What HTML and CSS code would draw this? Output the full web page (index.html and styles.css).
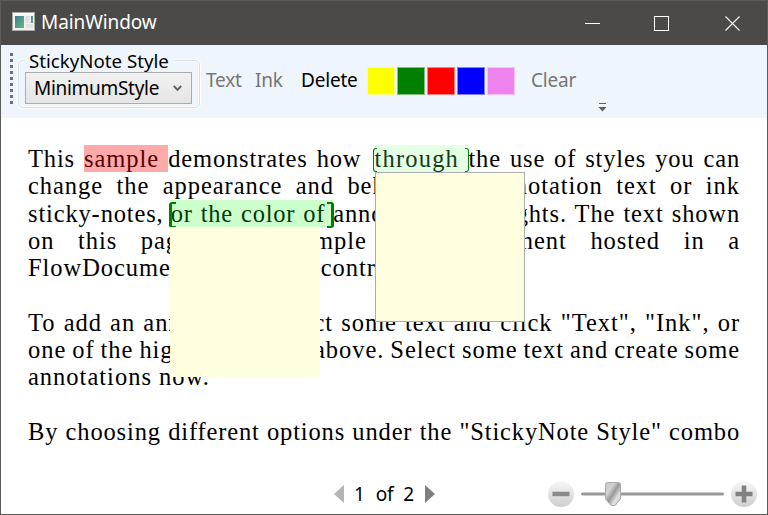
FILE: index.html
```
<!DOCTYPE html>
<html lang="en">
<head>
<meta charset="utf-8">
<title>MainWindow</title>
<link rel="stylesheet" href="styles.css">
</head>
<body>
<div class="window">
  <header class="titlebar">
    <svg class="app-icon" width="24" height="20" viewBox="0 0 24 20"><defs><linearGradient id="scr" x2="1" y2="1"><stop stop-color="#3c7d9c"/><stop offset="1" stop-color="#6bb878"/></linearGradient></defs><rect x=".5" y=".5" width="22" height="18" fill="#f2f2f2" stroke="#a9a9a9"/><path d="M1 2h21" stroke="#fff" stroke-width="2"/><rect x="3" y="4" width="9" height="12" fill="url(#scr)"/><rect x="13" y="4" width="5" height="7" fill="#e3e3e3"/><rect x="19" y="4" width="2" height="7" fill="url(#scr)"/><rect x="14" y="12" width="7" height="4" fill="#e3e3e3"/></svg>
    <span class="title">MainWindow</span>
    <div class="controls">
      <svg width="15" height="15"><path d="M0 7.5h15" stroke="#fff"/></svg>
      <svg width="15" height="15"><rect x=".5" y=".5" width="14" height="14" fill="none" stroke="#fff"/></svg>
      <svg class="close" width="15" height="15"><path d="M.5 .5l14 14M14.5 .5l-14 14" stroke="#fff" stroke-width="1.1"/></svg>
    </div>
  </header>
  <div class="toolbar">
    <div class="grip"></div>
    <fieldset class="group">
      <legend>StickyNote Style</legend>
      <div class="combo"><span>MinimumStyle</span><svg width="9" height="7"><path d="M.8 1l3.7 3.8L8.200 1" fill="none" stroke="#606060" stroke-width="1.9"/></svg></div>
    </fieldset>
    <span class="cmd text off">Text</span>
    <span class="cmd ink off">Ink</span>
    <span class="cmd delete">Delete</span>
    <div class="swatches"><i class="yellow"></i><i class="green"></i><i class="red"></i><i class="blue"></i><i class="violet"></i></div>
    <span class="cmd clear off">Clear</span>
    <svg class="overflow" width="9" height="11"><path d="M1 2.500h7" stroke="#fff" stroke-width="2"/><path d="M1 1.500h7" stroke="#606060"/><path d="M.5 5h8L4.500 9.500z" fill="#606060"/></svg>
  </div>
  <main class="page">
    <p class="l1">This <mark class="pink">sample </mark>demonstrates how <mark class="pale">through </mark>the use of styles you can</p>
    <p class="l2">change the appearance and behavior of annotation text or ink</p>
    <p class="l3">sticky-notes, <mark class="mint">or the color of </mark>annotation highlights. The text shown</p>
    <p class="l4">on this page is a sample flow document hosted in a</p>
    <p class="l5 last">FlowDocumentPageViewer control.</p>
    <p class="gap l7">To add an annotation, select some text and click "Text", "Ink", or</p>
    <p class="l8">one of the highlight colors above. Select some text and create some</p>
    <p class="l9 last">annotations now.</p>
    <p class="gap l11">By choosing different options under the "StickyNote Style" combo</p>
    <div class="note plain"></div>
    <div class="note bordered"></div>
  </main>
  <footer class="statusbar">
    <div class="pager">
      <svg width="10" height="18"><path d="M10 0v18L0 9z" fill="#b4b4b4"/></svg>
      <span>1</span><span class="of">of</span><span>2</span>
      <svg width="10" height="18"><path d="M0 0v18l10-9z" fill="#808080"/></svg>
    </div>
    <div class="zoom">
      <svg width="212" height="28"><defs><linearGradient id="btn" x2="0" y2="1"><stop stop-color="#f8f8f8"/><stop offset="1" stop-color="#cdcdcd"/></linearGradient><linearGradient id="thumb" x2="1" y2="1"><stop stop-color="#c4c4c4"/><stop offset=".3" stop-color="#d2d2d2"/><stop offset=".5" stop-color="#999"/><stop offset=".72" stop-color="#e2e2e2"/><stop offset="1" stop-color="#bbb"/></linearGradient></defs><circle cx="14" cy="14" r="13" fill="url(#btn)"/><path d="M5.500 14h17" stroke="#8b8b8b" stroke-width="4.500"/><path d="M35.500 14h140" stroke="#999" stroke-width="3" stroke-linecap="round"/><path d="M58.500 4.500q0-2 2-2h11q2 0 2 2v14.500l-5.500 6.500h-4l-5.500-6.500z" fill="url(#thumb)" stroke="#aaa"/><circle cx="197" cy="14" r="13" fill="url(#btn)"/><path d="M188.500 14h17M197 5.500v17" stroke="#818181" stroke-width="4.500"/></svg>
    </div>
  </footer>
</div>
</body>
</html>
```
FILE: styles.css
```
* { box-sizing: border-box; }
body { margin: 0; background: #fff; color: #000; }
.window {
  width: 768px; height: 515px; border: 1px solid #5b5b5a; background: #fff;
  display: flex; flex-direction: column; overflow: hidden;
  font: 19px/26px "Noto Sans", "Open Sans", sans-serif;
}
.titlebar { height: 44px; flex: none; background: #4c4a48; display: flex; align-items: center; padding: 0 27px 0 11px; }
.app-icon { flex: none; margin-top: -2px; }
.title { color: #fff; margin-left: 5px; letter-spacing: -.1px; margin-top: -2px; }
.controls { margin-left: auto; display: flex; gap: 54px; }
.controls svg { display: block; }
.controls .close { margin-left: 2px; }
.toolbar { height: 73px; flex: none; background: #eef5fd; display: flex; align-items: flex-start; white-space: nowrap; }
.grip { width: 3px; height: 54px; margin: 8px 0 0 9px; background: repeating-linear-gradient(#707070 0 3px, transparent 3px 6px); }
.group {
  width: 182px; height: 59px; margin: 4px 0 0 5px; padding: 0 7px 7px 6px; min-width: 0;
  border: 1px solid #d5dfe5; border-radius: 5px;
  box-shadow: inset 0 0 0 1px #fff, 0 0 0 1px #fff;
}
.group legend { padding: 0 5px; margin-left: -1px; line-height: 23px; font-size: 18.700px; background: #eef5fd; }
.combo {
  width: 167px; height: 32px; border: 1px solid #acacac; background: linear-gradient(#f1f1f1, #e5e5e5);
  display: flex; align-items: center; justify-content: space-between; padding: 0 9px 0 8px; letter-spacing: -.3px;
}
.cmd { margin-top: 22px; letter-spacing: -.2px; }
.off { color: #767676; }
.text { width: 37px; margin-left: 6px; }
.ink { width: 27px; margin-left: 12px; }
.delete { width: 55px; margin-left: 19px; }
.swatches { display: flex; gap: 2px; margin: 22px 0 0 11px; }
.swatches i { width: 28px; height: 28px; border: 1px solid #ffffff80; }
.yellow { background: #ff0; }
.green { background: #008000; }
.red { background: #f00; }
.blue { background: #00f; }
.violet { background: #ee82ee; }
.clear { width: 44px; margin-left: 16px; }
.overflow { margin: 57px 0 0 23px; }
.page {
  position: relative; height: 355px; flex: none; padding: 27px 27px 0;
  font: 24.500px/27.250px "Liberation Serif", serif; letter-spacing: .95px; word-spacing: -2px;
}
.page p { margin: 0; height: 27.250px; white-space: nowrap; text-align: justify; text-align-last: justify; }
.page p.last { text-align-last: left; }
.page p.gap { margin-top: 27.250px; }
.page .l1 { letter-spacing: .85px; }
.page .l1 .pink { letter-spacing: .95px; }
.page .l1 .pale { letter-spacing: 1.2px; margin-left: 4px; }
.page .l5 { letter-spacing: .95px; word-spacing: -6px; }
.page .l9 { letter-spacing: 1px; word-spacing: 0; }
.page .l11 { letter-spacing: .85px; }
mark { color: inherit; padding: 0; }
.pink { background: #ffaaaa; color: #550000; }
.pale, .mint { position: relative; color: #173c17; }
.pale { background: #e5ffe5; }
.mint { background: #ccffcc; color: #003c00; letter-spacing: .75px; margin-left: -1px; }
.page .l3 { letter-spacing: .85px; }
.pale::before, .pale::after, .mint::before, .mint::after {
  content: ""; position: absolute; top: 3px; bottom: 0; width: 3px; border: solid #008000;
}
.pale::before, .mint::before { left: -1px; border-width: 1px 0 1px 1.500px; border-radius: 3px 0 0 3px; }
.pale::after, .mint::after { right: -1px; border-width: 1px 1.500px 1px 0; border-radius: 0 3px 3px 0; }
.mint::before, .mint::after { width: 4px; top: 2px; bottom: -1px; }
.mint::before { left: -2px; border-width: 2px 0 2px 3px; }
.mint::after { border-width: 2px 3px 2px 0; }
.note { position: absolute; background: #ffffe0; }
.plain { left: 169px; top: 109px; width: 150px; height: 150px; }
.bordered { left: 374px; top: 54px; width: 150px; height: 150px; border: 1px solid #abadb3; }
.statusbar { height: 41px; display: flex; align-items: center; padding: 0 8px 0 333px; }
.pager { display: flex; align-items: center; gap: 11px; letter-spacing: -.2px; }
.pager span:first-of-type { margin-left: -1px; }
.pager .of { margin: 0 -1px 0 0; }
.zoom { margin-left: auto; }
.zoom svg { display: block; }
```
